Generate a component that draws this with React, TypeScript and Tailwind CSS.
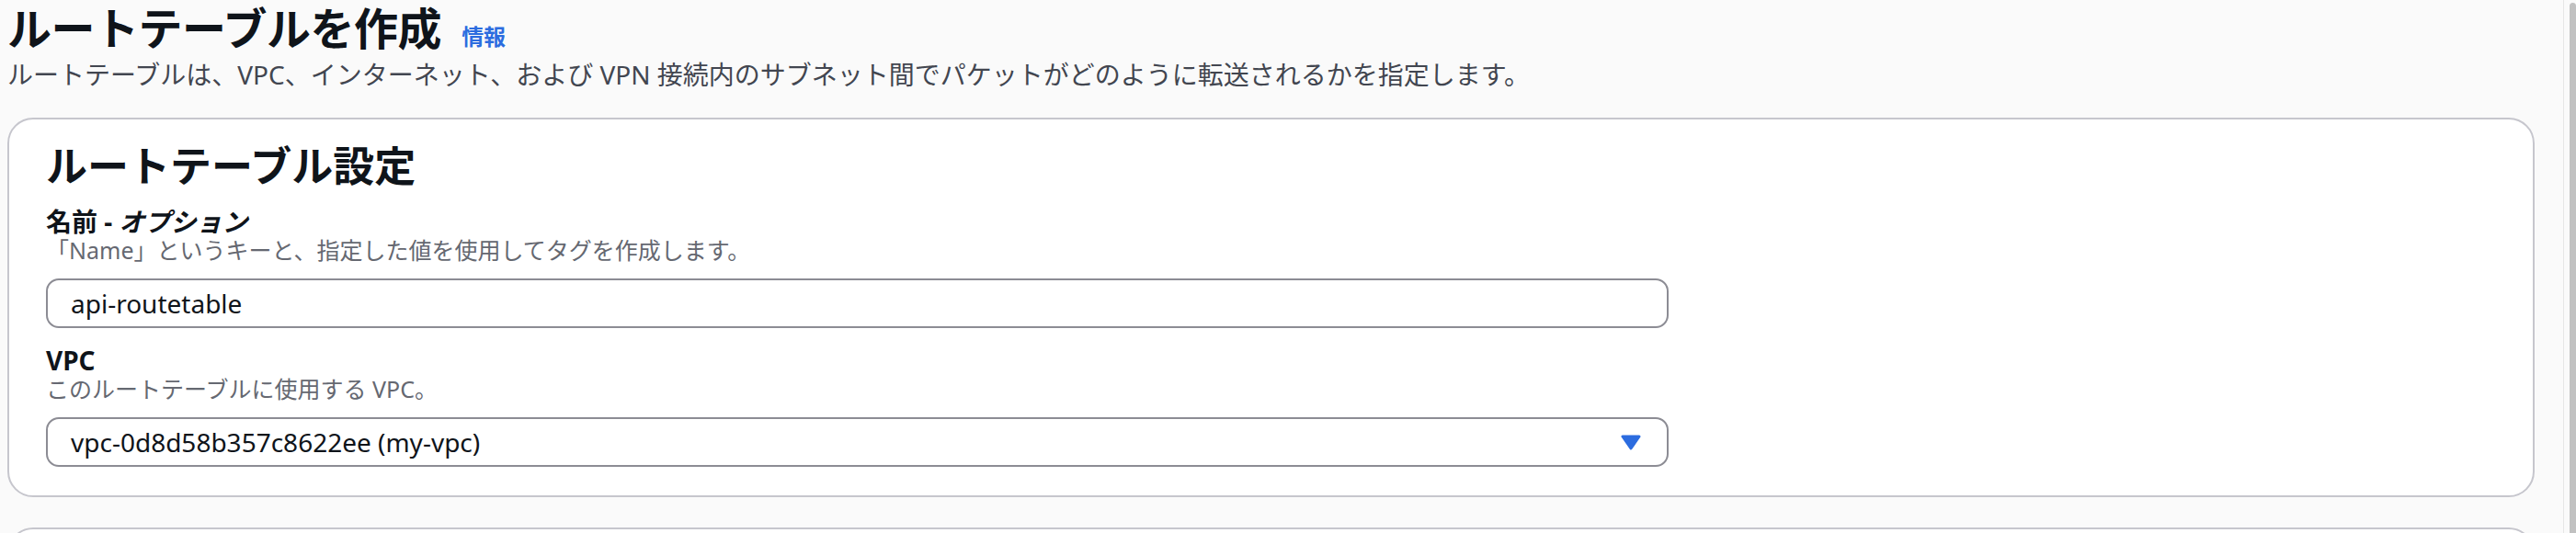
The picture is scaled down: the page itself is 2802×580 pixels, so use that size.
const font = "font-['Noto_Sans','Noto_Sans_CJK_JP',sans-serif]";

function Field({ label, optional, hint, children }: { label: string; optional?: string; hint: string; children: React.ReactNode }) {
  return (
    <div className="flex flex-col">
      <div className="text-[28px] leading-[32px] font-bold text-[#0f141a]">
        {label}
        {optional && (
          <>
            {' - '}
            <i>{optional}</i>
          </>
        )}
      </div>
      <div className="text-[25px] leading-[30px] text-[#656871]">{hint}</div>
      <div className="mt-[16px]">{children}</div>
    </div>
  );
}

export default function App() {
  return (
    <div className={`${font} flex h-[580px] w-full overflow-hidden bg-[#fafafa]`}>
      <div className="flex-1 pl-[8px] pr-[31px]">
        <div className="flex items-baseline gap-[22px] pt-[5px]">
          <h1 className="text-[48px] leading-[52px] font-bold text-[#0f141a] tracking-[-0.5px]">ルートテーブルを作成</h1>
          <a className="text-[24px] font-bold text-[#2c6cdf]">情報</a>
        </div>
        <p className="mt-[3px] text-[28px] leading-[40px] text-[#424650]">
          ルートテーブルは、VPC、インターネット、および VPN 接続内のサブネット間でパケットがどのように転送されるかを指定します。
        </p>

        <section className="mt-[27px] rounded-[28px] border-2 border-[#c6c6cd] bg-white px-[40px] pt-[25px] pb-[31px]">
          <h2 className="text-[45px] leading-[52px] font-bold text-[#0f141a]">ルートテーブル設定</h2>
          <div className="mt-[18px] flex flex-col gap-[19px]">
            <Field label="名前" optional="オプション" hint="「Name」というキーと、指定した値を使用してタグを作成します。">
              <div className="flex h-[54px] w-[1765px] items-center rounded-[14px] border-2 border-[#8c8c94] px-[25px] text-[28px] text-[#0f141a]">
                api-routetable
              </div>
            </Field>
            <Field label="VPC" hint="このルートテーブルに使用する VPC。">
              <div className="flex h-[54px] w-[1765px] items-center justify-between rounded-[14px] border-2 border-[#8c8c94] pl-[25px] pr-[28px] text-[28px] text-[#0f141a]">
                <span>vpc-0d8d58b357c8622ee (my-vpc)</span>
                <svg width="22" height="17" viewBox="0 0 22 17">
                  <polygon points="2,2 20,2 11,15" fill="#2c6cdf" stroke="#2c6cdf" strokeWidth="3" strokeLinejoin="round" />
                </svg>
              </div>
            </Field>
          </div>
        </section>

        <section className="mt-[33px] h-[80px] rounded-t-[28px] border-2 border-[#c6c6cd] bg-white" />
      </div>
      <div className="flex w-[14px] justify-end border-l border-[#e6e6e6] bg-[#fafafa] pt-[3px]">
        <div className="h-full w-[7px] rounded-t-full bg-[#c1c1c1]" />
      </div>
    </div>
  );
}
